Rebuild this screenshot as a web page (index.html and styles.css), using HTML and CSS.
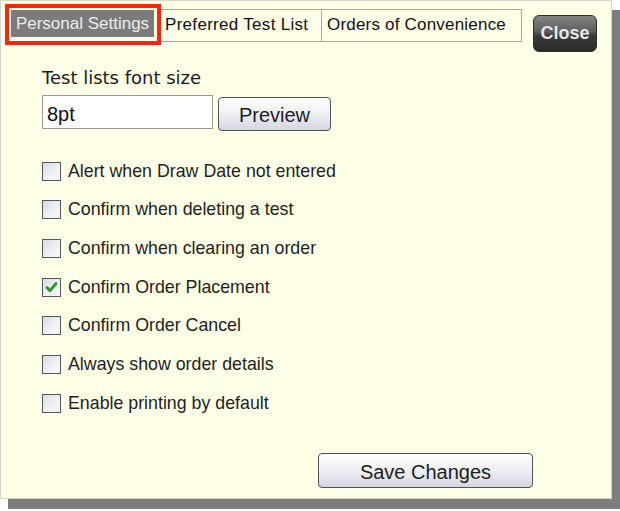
FILE: index.html
```
<!DOCTYPE html>
<html>
<head>
<meta charset="utf-8">
<link rel="stylesheet" href="styles.css">
</head>
<body>
<div class="frame">
<div class="panel">
  <div class="header">
    <div class="highlight">
      <div class="tab-active">Personal Settings</div>
    </div>
    <div class="tabs">
      <div class="tab tab-pref">Preferred Test List</div>
      <div class="tab tab-orders">Orders of Convenience</div>
    </div>
    <button class="close-btn">Close</button>
  </div>
  <div class="content">
    <div class="field-label">Test lists font size</div>
    <div class="font-row">
      <input class="font-input" type="text" value="8pt">
      <button class="btn preview-btn">Preview</button>
    </div>
    <div class="checklist">
      <div class="check-row"><span class="box"></span><span class="check-label">Alert when Draw Date not entered</span></div>
      <div class="check-row"><span class="box"></span><span class="check-label">Confirm when deleting a test</span></div>
      <div class="check-row"><span class="box"></span><span class="check-label">Confirm when clearing an order</span></div>
      <div class="check-row"><span class="box"><svg class="tick" viewBox="0 0 19 19" width="19" height="19"><path d="M5 9.5 L8 12.6 L14 5.5" fill="none" stroke="#2f9a32" stroke-width="3" stroke-linecap="round" stroke-linejoin="round"/></svg></span><span class="check-label">Confirm Order Placement</span></div>
      <div class="check-row"><span class="box"></span><span class="check-label">Confirm Order Cancel</span></div>
      <div class="check-row"><span class="box"></span><span class="check-label">Always show order details</span></div>
      <div class="check-row"><span class="box"></span><span class="check-label">Enable printing by default</span></div>
    </div>
  </div>
  <div class="footer">
    <button class="btn save-btn">Save Changes</button>
  </div>
</div>
</div>
</body>
</html>
```
FILE: styles.css
```
html, body {
  margin: 0;
  padding: 0;
  background: #ffffff;
}

.frame {
  position: relative;
  width: 620px;
  height: 509px;
}

.frame::before {
  content: "";
  position: absolute;
  left: 8px;
  top: 10px;
  width: 612px;
  height: 499px;
  background: #7d7d7d;
}

.panel {
  position: relative;
  box-sizing: border-box;
  width: 612px;
  height: 499px;
  background: #fffee6;
  border: 1px solid #d6d6c8;
  font-family: "Liberation Sans", Arial, sans-serif;
  color: #1e1e1e;
}

.header {
  display: flex;
  align-items: flex-start;
  padding-left: 4px;
}

.highlight {
  margin-top: 3px;
  border: 4px solid #f3280c;
  padding: 2px 3px 4px 2px;
}

.tab-active {
  box-sizing: border-box;
  width: 143px;
  height: 27px;
  background: #7b7b7b;
  color: #ececec;
  font-size: 17px;
  padding-top: 4px;
  text-align: center;
  white-space: nowrap;
}

.tabs {
  display: flex;
  box-sizing: border-box;
  height: 33px;
  margin-top: 8px;
  border-top: 1px solid #aaa99c;
  border-bottom: 1px solid #aaa99c;
}

.tab {
  box-sizing: border-box;
  font-size: 17px;
  padding-top: 5px;
  white-space: nowrap;
  color: #111;
  letter-spacing: 0.3px;
}

.tab-pref {
  width: 160px;
  padding-left: 4px;
}

.tab-orders {
  width: 201px;
  padding-left: 5px;
  border-left: 1px solid #aaa99c;
  border-right: 1px solid #aaa99c;
  letter-spacing: 0.2px;
}

.close-btn {
  box-sizing: border-box;
  width: 64px;
  height: 37px;
  margin: 14px 0 0 11px;
  padding: 0;
  border: 1px solid #2e2e2e;
  border-radius: 6px;
  background: linear-gradient(to bottom, #858585 0%, #5c5c5c 45%, #3a3a3a 55%, #2a2a2a 100%);
  color: #e6e6e6;
  font-family: "Liberation Sans", Arial, sans-serif;
  font-weight: bold;
  font-size: 18px;
}

.content {
  padding-left: 41px;
}

.field-label {
  margin-top: 15px;
  font-family: "DejaVu Sans", Verdana, sans-serif;
  font-size: 18px;
  color: #1a1a1a;
}

.font-row {
  display: flex;
  align-items: flex-start;
  margin-top: 7px;
}

.font-input {
  box-sizing: border-box;
  width: 171px;
  height: 34px;
  margin: 0;
  padding: 5px 4px 0;
  border: 1px solid #9a9a9a;
  background: #ffffff;
  font-family: "Liberation Sans", Arial, sans-serif;
  font-size: 20px;
  color: #111;
  outline: none;
}

.btn {
  box-sizing: border-box;
  margin: 0;
  border: 1px solid #4a5264;
  border-radius: 4px;
  background: linear-gradient(to bottom, #ffffff 0%, #f2f2f6 40%, #d6d6e2 100%);
  font-family: "Liberation Sans", Arial, sans-serif;
  font-size: 20px;
  color: #1e1e1e;
}

.preview-btn {
  width: 113px;
  height: 34px;
  margin: 2px 0 0 5px;
  padding: 2px 0 0;
}

.checklist {
  margin-top: 21px;
}

.check-row {
  display: flex;
  align-items: center;
  height: 38.67px;
}

.box {
  box-sizing: border-box;
  width: 19px;
  height: 19px;
  border: 1px solid #4e5a66;
  background: linear-gradient(135deg, #d8dae6 0%, #eceef2 50%, #fbfbf8 100%);
  margin-right: 7px;
  flex: none;
  position: relative;
}

.tick {
  position: absolute;
  left: -1px;
  top: -1px;
}

.check-label {
  font-size: 17.8px;
  white-space: nowrap;
  color: #1e1e1e;
}

.footer {
  display: flex;
  justify-content: flex-end;
  padding-right: 78px;
  margin-top: 30px;
}

.save-btn {
  width: 215px;
  height: 35px;
  padding: 4px 0 0;
}
```
